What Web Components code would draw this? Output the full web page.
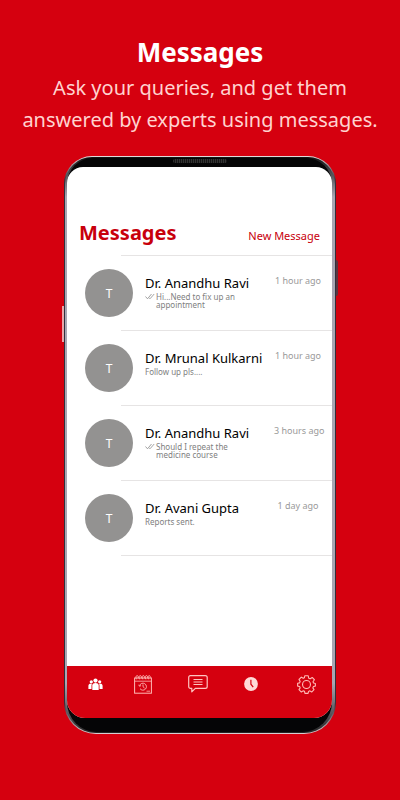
<!DOCTYPE html>
<html lang="en">
<head>
<meta charset="UTF-8">
<meta name="viewport" content="width=device-width, initial-scale=1">
<title>Messages</title>
<style>
    body {
        margin: 0;
        min-height: 100vh;
        background: #d5000f;
        font-family: "Noto Sans", "Open Sans", sans-serif;
    }
</style>
</head>
<body>
<promo-page>
    <promo-header slot="header" heading="Messages">Ask your queries, and get them answered by experts using messages.</promo-header>
    <phone-frame>
        <screen-header heading="Messages" action="New Message"></screen-header>
        <message-list>
            <message-item name="Dr. Anandhu Ravi" initial="T" time="1 hour ago" read>Hi...Need to fix up an appointment</message-item>
            <message-item name="Dr. Mrunal Kulkarni" initial="T" time="1 hour ago">Follow up pls....</message-item>
            <message-item name="Dr. Anandhu Ravi" initial="T" time="3 hours ago" read>Should I repeat the medicine course</message-item>
            <message-item name="Dr. Avani Gupta" initial="T" time="1 day ago">Reports sent.</message-item>
        </message-list>
        <tab-bar slot="tabs"></tab-bar>
    </phone-frame>
</promo-page>

<script>
class PromoPage extends HTMLElement {
    constructor() {
        super();
        this.attachShadow({ mode: 'open' });
    }

    connectedCallback() {
        this.shadowRoot.innerHTML = `
            <style>
                :host { display: block; padding: 32px 0 64px; }
                main { width: 68%; margin: 20px auto 0; }
            </style>
            <slot name="header"></slot>
            <main><slot></slot></main>
        `;
    }
}

class PromoHeader extends HTMLElement {
    constructor() {
        super();
        this.attachShadow({ mode: 'open' });
    }

    connectedCallback() {
        this.shadowRoot.innerHTML = `
            <style>
                :host { display: block; text-align: center; color: #fff; }
                h1 { margin: 0; font-size: 26px; line-height: 40px; font-weight: 700; }
                p {
                    max-width: 372px;
                    margin: 0 auto;
                    color: #ffd3d0;
                    font-size: 20px;
                    line-height: 32px;
                    font-weight: 400;
                }
            </style>
            <h1>${this.getAttribute('heading')}</h1>
            <p><slot></slot></p>
        `;
    }
}

class PhoneFrame extends HTMLElement {
    constructor() {
        super();
        this.attachShadow({ mode: 'open' });
    }

    connectedCallback() {
        this.shadowRoot.innerHTML = `
            <style>
                :host { display: block; position: relative; }
                .case {
                    display: flex;
                    box-sizing: border-box;
                    aspect-ratio: 272 / 578;
                    padding: 1px;
                    border-radius: 28px 28px 32px 32px;
                    background: linear-gradient(#e3dcdc, #30303c 24px, #30303c calc(100% - 30px), #d8d0d2);
                }
                .rim {
                    flex: 1;
                    display: flex;
                    padding: 1px 3px 1px 2px;
                    border-radius: 27px 27px 31px 31px;
                    background: linear-gradient(#111, #a9a6b3 40px, #a9a6b3 calc(100% - 50px), #222);
                }
                .bezel {
                    flex: 1;
                    display: flex;
                    padding: 9px 0 14px;
                    border-radius: 26px 26px 30px 30px;
                    background: #050506;
                }
                .screen {
                    flex: 1;
                    display: flex;
                    flex-direction: column;
                    overflow: hidden;
                    border-radius: 16px 16px 18px 18px;
                    background: #fff;
                }
                .content { flex: 1; }
                .speaker, .key { position: absolute; }
                .speaker {
                    top: 3px;
                    left: 40%;
                    right: 40%;
                    height: 4px;
                    border-radius: 2px;
                    background: repeating-linear-gradient(90deg, #333 0 1px, #161616 1px 2px);
                }
                .key { width: 2px; height: 36px; }
                .volume { left: -2px; top: 26%; background: #e8a5a8; }
                .power { right: -2px; top: 18%; background: #5b3440; border-radius: 0 2px 2px 0; }
            </style>
            <div class="case">
                <div class="rim">
                    <div class="bezel">
                        <div class="screen">
                            <div class="content"><slot></slot></div>
                            <slot name="tabs"></slot>
                        </div>
                    </div>
                </div>
            </div>
            <span class="speaker"></span>
            <span class="key volume"></span>
            <span class="key power"></span>
        `;
    }
}

class ScreenHeader extends HTMLElement {
    constructor() {
        super();
        this.attachShadow({ mode: 'open' });
    }

    connectedCallback() {
        this.shadowRoot.innerHTML = `
            <style>
                :host {
                    display: flex;
                    justify-content: space-between;
                    align-items: baseline;
                    padding: 52px 12px 8px 12px;
                    color: #c8000c;
                }
                h2 { margin: 0; font-size: 20px; line-height: 28px; font-weight: 700; }
                button {
                    padding: 0;
                    border: 0;
                    background: none;
                    color: inherit;
                    font: inherit;
                    font-size: 11px;
                    line-height: 16px;
                    cursor: pointer;
                }
            </style>
            <h2>${this.getAttribute('heading')}</h2>
            <button type="button">${this.getAttribute('action')}</button>
        `;
    }
}

class MessageList extends HTMLElement {
    constructor() {
        super();
        this.attachShadow({ mode: 'open' });
    }

    connectedCallback() {
        this.setAttribute('role', 'list');
        this.shadowRoot.innerHTML = `
            <style>
                :host { display: block; }
                hr { margin: 0 0 0 54px; border: 0; height: 1px; background: #e6e4e4; }
            </style>
            <hr>
            <slot></slot>
        `;
    }
}

class MessageItem extends HTMLElement {
    constructor() {
        super();
        this.attachShadow({ mode: 'open' });
    }

    connectedCallback() {
        const ticks = this.hasAttribute('read')
            ? `<svg viewBox="0 0 10 7" width="10" height="7" aria-hidden="true">
                   <path d="M.5 3.5 2.5 5.8 6.5 1M4.3 5.2 5 5.8 9.2 1" fill="none" stroke="#8c8c8c" stroke-width=".8"/>
               </svg>`
            : '';

        this.setAttribute('role', 'listitem');
        this.shadowRoot.innerHTML = `
            <style>
                :host { display: block; }
                .row {
                    display: grid;
                    grid-template-columns: 48px minmax(0, 1fr) 48px;
                    column-gap: 12px;
                    padding: 13px 10px 13px 18px;
                }
                .avatar {
                    display: grid;
                    place-items: center;
                    height: 48px;
                    border-radius: 50%;
                    background: #939291;
                    color: #fff;
                    font-size: 12px;
                }
                .text { padding-top: 4px; }
                h3 {
                    margin: 0;
                    color: #000;
                    font-size: 13px;
                    line-height: 20px;
                    font-weight: 400;
                    white-space: nowrap;
                }
                p {
                    display: flex;
                    gap: 1px;
                    max-width: 96px;
                    margin: 0;
                    color: #808080;
                    font-size: 8px;
                    line-height: 8px;
                }
                svg { flex: none; }
                time {
                    padding-top: 4px;
                    color: #999;
                    font-size: 9px;
                    line-height: 16px;
                    text-align: center;
                    white-space: nowrap;
                }
                hr { margin: 0 0 0 54px; border: 0; height: 1px; background: #e6e4e4; }
            </style>
            <div class="row">
                <span class="avatar">${this.getAttribute('initial')}</span>
                <div class="text">
                    <h3>${this.getAttribute('name')}</h3>
                    <p>${ticks}<span><slot></slot></span></p>
                </div>
                <time>${this.getAttribute('time')}</time>
            </div>
            <hr>
        `;
    }
}

const tabs = [
    {
        label: 'Doctors',
        icon: `<svg viewBox="0 0 15 12" width="15" height="12" fill="#fff">
            <circle cx="7.5" cy="2.6" r="2.1"/><circle cx="3.3" cy="3.8" r="1.6"/><circle cx="11.7" cy="3.8" r="1.6"/>
            <path d="M4.3 12V7.5C4.3 4.3 10.7 4.3 10.7 7.5V12Z"/>
            <path d="M.4 11V8C.4 6 2 5.6 3.9 6 3.6 6.5 3.5 7 3.5 7.6V11ZM14.6 11V8C14.6 6 13 5.6 11.1 6 11.4 6.5 11.5 7 11.5 7.6V11Z"/>
        </svg>`
    },
    {
        label: 'Appointments',
        icon: `<svg viewBox="0 0 18 19" width="18" height="19" fill="none" stroke="#ffb9b5">
            <rect x=".6" y="3" width="16.8" height="15.2"/>
            <path d="M.6 6.2H17.4" stroke-width=".8"/>
            <path d="M2.5 4.3C1.3 2.5 2 .6 3.1.6S4.6 2 4 3.4M5.6 4.3C4.4 2.5 5.1.6 6.2.6S7.7 2 7.1 3.4M8.7 4.3C7.5 2.5 8.2.6 9.3.6S10.8 2 10.2 3.4M11.8 4.3C10.6 2.5 11.3.6 12.4.6S13.9 2 13.3 3.4M14.6 4.3C13.5 2.5 14.2.6 15.2.6S16.6 2 16 3.4" stroke-width=".9"/>
            <path d="M6 13.6A3.5 3.5 0 1 0 5.6 10.6M4.7 9.8 5.6 11.3 7.1 10.5M9 9.4V11.7L10.6 13.1" stroke-width=".9"/>
            <path d="M12.5 16.2H16" stroke-width=".8"/>
        </svg>`
    },
    {
        label: 'Messages',
        icon: `<svg viewBox="0 0 20 18" width="20" height="18" fill="none" stroke="#ffc4c0" stroke-linejoin="round">
            <path d="M2.5.7H17.3Q19.2.7 19.2 2.6V11.4Q19.2 13.3 17.3 13.3H7.3L3.8 16.8V13.3H2.5Q.7 13.3.7 11.4V2.6Q.7.7 2.5.7Z" stroke-width="1.2"/>
            <path d="M5.5 4.5H14.5M5.5 7H14.5M5.5 9.5H14.5"/>
        </svg>`
    },
    {
        label: 'History',
        icon: `<svg viewBox="0 0 14 14" width="14" height="14">
            <circle cx="7" cy="7" r="6.9" fill="#ffdad7"/>
            <path d="M6.9 2.8V7.2L9.2 10.2" fill="none" stroke="#d5000f" stroke-width="1.2"/>
        </svg>`
    },
    {
        label: 'Settings',
        icon: `<svg viewBox="0 0 24 24" width="19" height="19" fill="none" stroke="#ffb9b5" stroke-width="1.4" stroke-linejoin="round">
            <circle cx="12" cy="12" r="5"/>
            <path d="M9.8 1H14.2L14.8 4 16.7 4.8 19.2 3.1 22 6 20.2 8.5 20.9 10.2 23.2 10.7V14L20.8 14.5 20 16.3 21.5 18.5 18.5 21.5 16.3 20 14.6 20.7 14 23.2H10L9.5 20.7 7.7 20 5.5 21.5 2.5 18.5 4 16.3 3.3 14.5.8 14V10.5L3.3 10 4 8 2.5 5.7 5.5 2.7 7.8 4.2 9.3 3.6Z"/>
        </svg>`
    }
];

class TabBar extends HTMLElement {
    constructor() {
        super();
        this.attachShadow({ mode: 'open' });
    }

    connectedCallback() {
        this.shadowRoot.innerHTML = `
            <style>
                :host { display: block; background: #d5000f; }
                nav {
                    display: grid;
                    grid-template-columns: 46fr 54fr 56fr 53fr 19fr;
                    align-items: center;
                    padding: 6px 16px 22px 21px;
                }
                button {
                    display: flex;
                    align-items: center;
                    justify-self: start;
                    height: 24px;
                    padding: 0;
                    border: 0;
                    background: none;
                    cursor: pointer;
                }
            </style>
            <nav>
                ${tabs.map(tab => `<button type="button" aria-label="${tab.label}">${tab.icon}</button>`).join('')}
            </nav>
        `;
    }
}

customElements.define('promo-page', PromoPage);
customElements.define('promo-header', PromoHeader);
customElements.define('phone-frame', PhoneFrame);
customElements.define('screen-header', ScreenHeader);
customElements.define('message-list', MessageList);
customElements.define('message-item', MessageItem);
customElements.define('tab-bar', TabBar);
</script>
</body>
</html>
